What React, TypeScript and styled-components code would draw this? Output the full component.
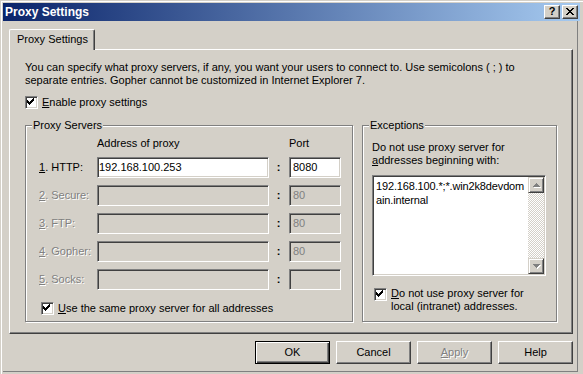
import React from "react";
import styled, { createGlobalStyle } from "styled-components";

const face = "#d4d0c8";
const shade = "#808080";
const dark = "#404040";

const GlobalStyle = createGlobalStyle`
  html, body {
    margin: 0;
    padding: 0;
    background: ${face};
  }
  body {
    font-family: "Liberation Sans", Arial, sans-serif;
    font-size: 11px;
    line-height: 13px;
    color: #000;
  }
  * {
    box-sizing: border-box;
  }
`;

const Window = styled.div`
  width: 583px;
  height: 374px;
  background: ${face};
  padding: 1px 0 0 1px;
  display: flex;
  flex-direction: column;
  overflow: hidden;
`;

const Frame = styled.div`
  flex: 1;
  display: flex;
  flex-direction: column;
  border-top: 1px solid #fff;
  border-left: 1px solid #fff;
  padding: 1px 3px 0 1px;
`;

const TitleBar = styled.div`
  height: 18px;
  display: flex;
  align-items: center;
  justify-content: space-between;
  padding: 0 2px;
  background: linear-gradient(to right, #0a246a, #a6caf0);
`;

const TitleText = styled.span`
  color: #fff;
  font-weight: bold;
  font-size: 12px;
`;

const CaptionButtons = styled.div`
  display: flex;
  gap: 2px;
`;

const CaptionButton = styled.div`
  width: 16px;
  height: 14px;
  display: flex;
  align-items: center;
  justify-content: center;
  background: ${face};
  border: 1px solid;
  border-color: #fff ${dark} ${dark} #fff;
  box-shadow: inset -1px -1px 0 ${shade};
  font-weight: bold;
  font-size: 11px;
  line-height: 11px;
  padding-bottom: 1px;
`;

const Body = styled.div`
  width: 575px;
  height: 351px;
  border-right: 1px solid ${shade};
  border-bottom: 1px solid ${shade};
  padding: 8px 4px 0 6px;
  display: flex;
  flex-direction: column;
`;

const TabStrip = styled.div`
  display: flex;
  height: 20px;
`;

const Tab = styled.div`
  position: relative;
  z-index: 1;
  width: 86px;
  height: 21px;
  padding: 3px 0 0 7px;
  background: ${face};
  border-top: 1px solid #fff;
  border-left: 1px solid #fff;
  border-right: 1px solid ${dark};
  border-radius: 2px 2px 0 0;
  box-shadow: inset -1px 0 0 ${shade};
`;

const TabPanel = styled.div`
  height: 285px;
  border: 1px solid;
  border-color: #fff ${dark} ${dark} #fff;
  box-shadow: inset -1px -1px 0 ${shade};
  padding: 11px 0 0 15px;
`;

const Intro = styled.p`
  margin: 0;
`;

const CheckRow = styled.div<{ $top: number; $left?: number }>`
  display: flex;
  align-items: center;
  gap: 4px;
  margin: ${p => p.$top}px 0 0 ${p => p.$left ?? 0}px;
`;

const TopCheckRow = styled(CheckRow)`
  align-items: flex-start;
`;

const CheckBox = styled.div`
  width: 13px;
  height: 13px;
  flex: none;
  background: #fff;
  border: 1px solid;
  border-color: ${shade} #fff #fff ${shade};
  box-shadow: inset 1px 1px 0 ${dark}, inset -1px -1px 0 ${face};
  svg {
    display: block;
  }
`;

const Key = styled.span`
  text-decoration: underline;
`;

const MultiLabel = styled.span`
  margin-top: -1px;
`;

const Groups = styled.div`
  display: flex;
  gap: 9px;
  margin-top: 16px;
`;

const GroupBox = styled.div<{ $width: number; $pad: string }>`
  position: relative;
  width: ${p => p.$width}px;
  height: 197px;
  border: 1px solid ${shade};
  box-shadow: inset 1px 1px 0 #fff, 1px 1px 0 #fff;
  padding: ${p => p.$pad};
`;

const Legend = styled.span`
  position: absolute;
  top: -7px;
  left: 6px;
  padding: 0 1px;
  background: ${face};
`;

const ServerGrid = styled.div`
  display: grid;
  grid-template-columns: 58px 172px 20px 52px;
  grid-template-rows: 13px repeat(5, 21px);
  row-gap: 7px;
  align-items: center;
`;

const FieldLabel = styled.span<{ $off?: boolean }>`
  color: ${p => (p.$off ? shade : "#000")};
  text-shadow: ${p => (p.$off ? "1px 1px 0 #fff" : "none")};
`;

const Colon = styled.span`
  text-align: center;
  font-weight: bold;
  padding-right: 1px;
`;

const TextBox = styled.div<{ $off?: boolean; $pad: number }>`
  height: 21px;
  display: flex;
  align-items: center;
  padding: 0 ${p => p.$pad}px 1px;
  background: ${p => (p.$off ? face : "#fff")};
  color: ${p => (p.$off ? shade : "#000")};
  border: 1px solid;
  border-color: ${shade} #fff #fff ${shade};
  box-shadow: inset 1px 1px 0 ${dark}, inset -1px -1px 0 ${face};
`;

const ListBox = styled.div`
  width: 174px;
  height: 101px;
  margin-top: 8px;
  display: flex;
  background: #fff;
  border: 1px solid;
  border-color: ${shade} #fff #fff ${shade};
  box-shadow: inset 1px 1px 0 ${dark}, inset -1px -1px 0 ${face};
  padding: 1px;
`;

const ListText = styled.div`
  flex: 1;
  padding: 2px 0 0 2px;
  line-height: 14px;
  letter-spacing: -0.15px;
`;

const ScrollBar = styled.div`
  width: 16px;
  display: flex;
  flex-direction: column;
`;

const ScrollButton = styled.div`
  width: 16px;
  height: 16px;
  flex: none;
  background: ${face};
  border: 1px solid;
  border-color: ${face} ${dark} ${dark} ${face};
  box-shadow: inset 1px 1px 0 #fff, inset -1px -1px 0 ${shade};
  svg {
    display: block;
  }
`;

const ScrollTrack = styled.div`
  flex: 1;
  background-image: repeating-conic-gradient(#fff 0 25%, ${face} 0 50%);
  background-size: 2px 2px;
`;

const ExceptText = styled.p`
  margin: 0;
`;

const ButtonRow = styled.div`
  display: flex;
  justify-content: flex-end;
  gap: 6px;
  margin-top: 7px;
`;

const PushButton = styled.div<{ $default?: boolean; $off?: boolean }>`
  width: 75px;
  height: 23px;
  display: flex;
  align-items: center;
  justify-content: center;
  background: ${face};
  color: ${p => (p.$off ? shade : "#000")};
  text-shadow: ${p => (p.$off ? "1px 1px 0 #fff" : "none")};
  border: 1px solid;
  border-color: ${p => (p.$default ? "#000" : `#fff ${dark} ${dark} #fff`)};
  box-shadow: ${p =>
    p.$default
      ? `inset 1px 1px 0 #fff, inset -1px -1px 0 ${dark}, inset -2px -2px 0 ${shade}`
      : `inset -1px -1px 0 ${shade}`};
`;

const CheckMark = () => (
  <svg width="9" height="9" viewBox="0 0 9 9" shapeRendering="crispEdges">
    {[2, 3, 4, 3, 2, 1, 0].map((start, c) => (
      <rect key={c} x={1 + c} y={1 + start} width="1" height="3" fill="#000" />
    ))}
  </svg>
);

const closeRows = [
  [0, 2, 6, 2],
  [1, 2, 5, 2],
  [2, 4],
  [3, 2],
  [2, 4],
  [1, 2, 5, 2],
  [0, 2, 6, 2],
];

const CloseGlyph = () => (
  <svg width="8" height="7" viewBox="0 0 8 7" shapeRendering="crispEdges">
    {closeRows.map((r, y) => (
      <React.Fragment key={y}>
        <rect x={r[0]} y={y} width={r[1]} height="1" fill="#000" />
        {r.length > 2 && <rect x={r[2]} y={y} width={r[3]} height="1" fill="#000" />}
      </React.Fragment>
    ))}
  </svg>
);

const Arrow = ({ up }: { up: boolean }) => {
  const pts = up ? "3,9 7,5 11,9" : "3,5 7,9 11,5";
  return (
    <svg width="14" height="14" viewBox="0 0 14 14" shapeRendering="crispEdges">
      <polygon points={pts} fill="#fff" transform="translate(1 1)" />
      <polygon points={pts} fill={shade} />
    </svg>
  );
};

const Check = () => (
  <CheckBox>
    <CheckMark />
  </CheckBox>
);

const servers = [
  { key: "1", name: ". HTTP:", address: "192.168.100.253", port: "8080", on: true },
  { key: "2", name: ". Secure:", address: "", port: "80", on: false },
  { key: "3", name: ". FTP:", address: "", port: "80", on: false },
  { key: "4", name: ". Gopher:", address: "", port: "80", on: false },
  { key: "5", name: ". Socks:", address: "", port: "", on: false },
];

const App = (): React.ReactElement => (
  <>
    <GlobalStyle />
    <Window>
      <Frame>
        <TitleBar>
          <TitleText>Proxy Settings</TitleText>
          <CaptionButtons>
            <CaptionButton>?</CaptionButton>
            <CaptionButton>
              <CloseGlyph />
            </CaptionButton>
          </CaptionButtons>
        </TitleBar>
        <Body>
          <TabStrip>
            <Tab>Proxy Settings</Tab>
          </TabStrip>
          <TabPanel>
            <Intro>
              You can specify what proxy servers, if any, you want your users to connect to. Use
              semicolons ( ; ) to
              <br />
              separate entries. Gopher cannot be customized in Internet Explorer 7.
            </Intro>
            <CheckRow $top={9}>
              <Check />
              <span>
                <Key>E</Key>nable proxy settings
              </span>
            </CheckRow>
            <Groups>
              <GroupBox $width={328} $pad="11px 0 0 13px">
                <Legend>Proxy Servers</Legend>
                <ServerGrid>
                  <span />
                  <span>Address of proxy</span>
                  <span />
                  <span>Port</span>
                  {servers.map(s => (
                    <React.Fragment key={s.key}>
                      <FieldLabel $off={!s.on}>
                        <Key>{s.key}</Key>
                        {s.name}
                      </FieldLabel>
                      <TextBox $off={!s.on} $pad={1}>
                        {s.address}
                      </TextBox>
                      <Colon>:</Colon>
                      <TextBox $off={!s.on} $pad={3}>
                        {s.port}
                      </TextBox>
                    </React.Fragment>
                  ))}
                </ServerGrid>
                <CheckRow $top={12} $left={2}>
                  <Check />
                  <span>
                    <Key>U</Key>se the same proxy server for all addresses
                  </span>
                </CheckRow>
              </GroupBox>
              <GroupBox $width={195} $pad="15px 0 0 9px">
                <Legend>Exceptions</Legend>
                <ExceptText>
                  Do not use proxy server for
                  <br />
                  <Key>a</Key>ddresses beginning with:
                </ExceptText>
                <ListBox>
                  <ListText>
                    192.168.100.*;*.win2k8devdom
                    <br />
                    ain.internal
                  </ListText>
                  <ScrollBar>
                    <ScrollButton>
                      <Arrow up />
                    </ScrollButton>
                    <ScrollTrack />
                    <ScrollButton>
                      <Arrow up={false} />
                    </ScrollButton>
                  </ScrollBar>
                </ListBox>
                <TopCheckRow $top={12} $left={2}>
                  <Check />
                  <MultiLabel>
                    <Key>D</Key>o not use proxy server for
                    <br />
                    local (intranet) addresses.
                  </MultiLabel>
                </TopCheckRow>
              </GroupBox>
            </Groups>
          </TabPanel>
          <ButtonRow>
            <PushButton $default>OK</PushButton>
            <PushButton>Cancel</PushButton>
            <PushButton $off>
              <span>
                <Key>A</Key>pply
              </span>
            </PushButton>
            <PushButton>Help</PushButton>
          </ButtonRow>
        </Body>
      </Frame>
    </Window>
  </>
);

export default App;
